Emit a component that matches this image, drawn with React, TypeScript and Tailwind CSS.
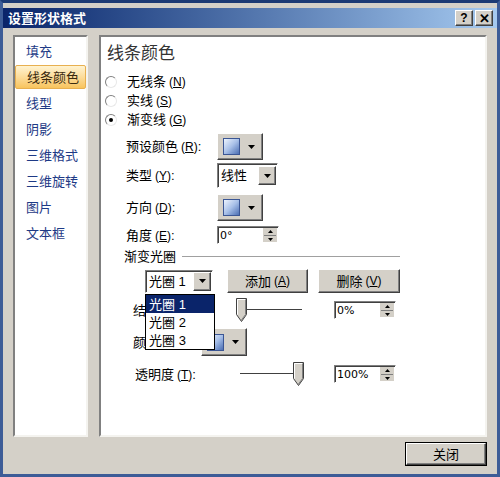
import type { ReactNode } from "react";

const navItems = ["填充", "线条颜色", "线型", "阴影", "三维格式", "三维旋转", "图片", "文本框"];

const raised =
  "bg-[#d4d0c8] border border-t-white border-l-white border-r-[#404040] border-b-[#404040] shadow-[inset_-1px_-1px_0_#808080]";
const sunken =
  "bg-white border border-t-[#808080] border-l-[#808080] border-r-white border-b-white shadow-[inset_1px_1px_0_#404040]";

function Key({ k }: { k: string }) {
  return (
    <span className="ml-[3px] text-[12px]">
      (<span className="underline">{k}</span>)
    </span>
  );
}

function Arrow() {
  return (
    <svg width="7" height="4" viewBox="0 0 7 4">
      <path d="M0 0h7L3.5 4z" fill="#000" />
    </svg>
  );
}

function Swatch() {
  return (
    <div className="w-[17px] h-[17px] border border-[#3b5694] bg-linear-to-br from-[#eef4fd] via-[#a8c0e8] to-[#4d6fb3]" />
  );
}

function ColorButton({ h = "h-[27px]" }: { h?: string }) {
  return (
    <div className={`${raised} ${h} w-[46px] flex items-center pl-[5px]`}>
      <Swatch />
      <div className="ml-[8px]">
        <Arrow />
      </div>
    </div>
  );
}

function Spin({ value }: { value: string }) {
  return (
    <div className={`${sunken} w-[62px] h-[18px] flex items-center`}>
      <span className="flex-1 pl-[2px] text-[11px] leading-none font-['DejaVu_Sans',sans-serif]">{value}</span>
      <div className="w-[14px] h-[14px] mr-[1px] flex flex-col items-center justify-center gap-[2px] bg-[#d4d0c8]">
        <svg width="5" height="3" viewBox="0 0 5 3">
          <path d="M2.5 0L5 3H0z" fill="#000" />
        </svg>
        <div className="w-[12px] h-px bg-[#808080]" />
        <svg width="5" height="3" viewBox="0 0 5 3">
          <path d="M0 0h5L2.5 3z" fill="#000" />
        </svg>
      </div>
    </div>
  );
}

function Slider({ end }: { end?: boolean }) {
  return (
    <div className="relative w-[68px] h-[24px]">
      <div className="absolute left-[4px] right-[2px] top-[11px] h-[2px] bg-[#404040] border-b border-b-white" />
      <svg
        className={`absolute top-0 ${end ? "right-0" : "left-0"}`}
        width="11"
        height="24"
        viewBox="0 0 11 24"
      >
        <path d="M0.5 0.5h10v16l-5 7l-5-7z" fill="#d4d0c8" stroke="#404040" />
        <path d="M1.5 16.5v-15h8" fill="none" stroke="#fff" />
        <path d="M9.5 1.5v15l-4 5.5" fill="none" stroke="#808080" />
      </svg>
    </div>
  );
}

function Label({ children, w }: { children: ReactNode; w: string }) {
  return <div className={`${w} shrink-0 text-[13px] leading-none`}>{children}</div>;
}

function Radio({ checked, children }: { checked?: boolean; children: ReactNode }) {
  return (
    <div className="h-[19px] flex items-center pl-[4px]">
      <div className="w-[12px] h-[12px] rounded-full bg-white border border-t-[#808080] border-l-[#808080] border-r-[#e8e8e8] border-b-[#e8e8e8] flex items-center justify-center">
        {checked && <div className="w-[4px] h-[4px] rounded-full bg-black" />}
      </div>
      <div className="ml-[10px] text-[13px] leading-none">{children}</div>
    </div>
  );
}

export default function App() {
  return (
    <div className="w-[500px] h-[477px] bg-[#d4d0c8] border-[3px] border-[#3d5c97] border-t-[#1c3a74] flex flex-col pt-[5px] text-black font-['Liberation_Sans','Noto_Sans_CJK_SC',sans-serif]">
      {/* title bar */}
      <div className="h-[20px] bg-linear-to-r from-[#0a246a] to-[#a6caf0] flex items-center pl-[5px] pr-[4px]">
        <span className="text-white font-bold text-[13px] leading-none">设置形状格式</span>
        <div className="ml-auto flex gap-[2px]">
          <div className={`${raised} w-[18px] h-[16px] flex items-center justify-center text-[12px] font-bold leading-none`}>?</div>
          <div className={`${raised} w-[18px] h-[16px] flex items-center justify-center text-[13px] font-bold leading-none`}>✕</div>
        </div>
      </div>

      {/* body */}
      <div className="flex px-[10px] pt-[7px] gap-[11px]">
        {/* nav */}
        <div className="w-[75px] h-[402px] bg-white border-2 border-t-[#808080] border-l-[#808080] border-r-[#f4f3ef] border-b-[#f4f3ef] pt-[2px]">
          {navItems.map((item, i) => (
            <div
              key={item}
              className={`h-[24px] mb-[2px] flex items-center pl-[11px] text-[13px] leading-none ${
                i === 1
                  ? "bg-linear-to-b from-[#fff3d0] to-[#f8c45c] border border-[#e8b050] rounded-[2px] text-[#3a2a10]"
                  : "text-[#1e3a86]"
              }`}
            >
              {item}
            </div>
          ))}
        </div>

        {/* content */}
        <div className="w-[388px] h-[402px] bg-white border-2 border-t-[#808080] border-l-[#808080] border-r-[#f4f3ef] border-b-[#f4f3ef] flex flex-col pt-[7px]">
          <div className="pl-[6px] h-[20px] text-[17px] leading-[20px] text-[#333]">线条颜色</div>

          <div className="mt-[8px]">
            <Radio>
              无线条<Key k="N" />
            </Radio>
            <Radio>
              实线<Key k="S" />
            </Radio>
            <Radio checked>
              渐变线<Key k="G" />
            </Radio>
          </div>

          <div className="pl-[25px] flex items-center mt-[4px]">
            <Label w="w-[91px]">
              预设颜色<Key k="R" />:
            </Label>
            <ColorButton />
          </div>

          <div className="pl-[25px] flex items-center mt-[3px]">
            <Label w="w-[91px]">
              类型<Key k="Y" />:
            </Label>
            <div className={`${sunken} w-[61px] h-[25px] flex items-center`}>
              <span className="flex-1 pl-[3px] text-[13px] leading-none">线性</span>
              <div className={`${raised} w-[18px] h-[19px] mr-[1px] flex items-center justify-center`}>
                <Arrow />
              </div>
            </div>
          </div>

          <div className="pl-[25px] flex items-center mt-[6px]">
            <Label w="w-[91px]">
              方向<Key k="D" />:
            </Label>
            <ColorButton />
          </div>

          <div className="pl-[25px] flex items-center mt-[5px]">
            <Label w="w-[91px]">
              角度<Key k="E" />:
            </Label>
            <Spin value="0°" />
          </div>

          <div className="pl-[23px] pr-[85px] flex items-center mt-[4px] h-[16px]">
            <span className="text-[13px] leading-none">渐变光圈</span>
            <div className="flex-1 ml-[6px] h-px bg-[#a0a0a0]" />
          </div>

          <div className="relative pl-[44px] flex items-center mt-[5px] h-[24px]">
            <div className={`${sunken} w-[68px] h-[23px] flex items-center`}>
              <span className="flex-1 pl-[3px] text-[13px] leading-none">光圈 1</span>
              <div className={`${raised} w-[18px] h-[19px] mr-[1px] flex items-center justify-center`}>
                <Arrow />
              </div>
            </div>
            <div className={`${raised} ml-[14px] w-[81px] h-[24px] flex items-center justify-center text-[13px] leading-none`}>
              添加<Key k="A" />
            </div>
            <div className={`${raised} ml-[10px] w-[82px] h-[24px] flex items-center justify-center text-[13px] leading-none`}>
              删除<Key k="V" />
            </div>

            <div className="absolute left-[44px] top-[25px] w-[70px] border border-black bg-white z-10">
              {["1", "2", "3"].map((n, i) => (
                <div
                  key={n}
                  className={`h-[18px] flex items-center pl-[3px] text-[13px] leading-none ${
                    i === 0 ? "bg-[#0a246a] text-white" : ""
                  }`}
                >
                  光圈 {n}
                </div>
              ))}
            </div>
          </div>

          <div className="pl-[32px] flex items-center mt-[5px] h-[24px]">
            <Label w="w-[103px]">
              结束位置<Key k="O" />:
            </Label>
            <Slider />
            <div className="ml-[30px]">
              <Spin value="0%" />
            </div>
          </div>

          <div className="pl-[32px] flex items-center mt-[6px]">
            <Label w="w-[68px]">
              颜色<Key k="C" />:
            </Label>
            <ColorButton h="h-[28px]" />
          </div>

          <div className="pl-[34px] flex items-center mt-[6px] h-[24px]">
            <Label w="w-[101px]">
              透明度<Key k="T" />:
            </Label>
            <Slider end />
            <div className="ml-[30px]">
              <Spin value="100%" />
            </div>
          </div>
        </div>
      </div>

      <div className="flex justify-end pr-[10px] mt-[5px]">
        <div className="w-[82px] h-[24px] border border-black">
          <div className={`${raised} w-full h-full flex items-center justify-center text-[13px] leading-none`}>关闭</div>
        </div>
      </div>
    </div>
  );
}
